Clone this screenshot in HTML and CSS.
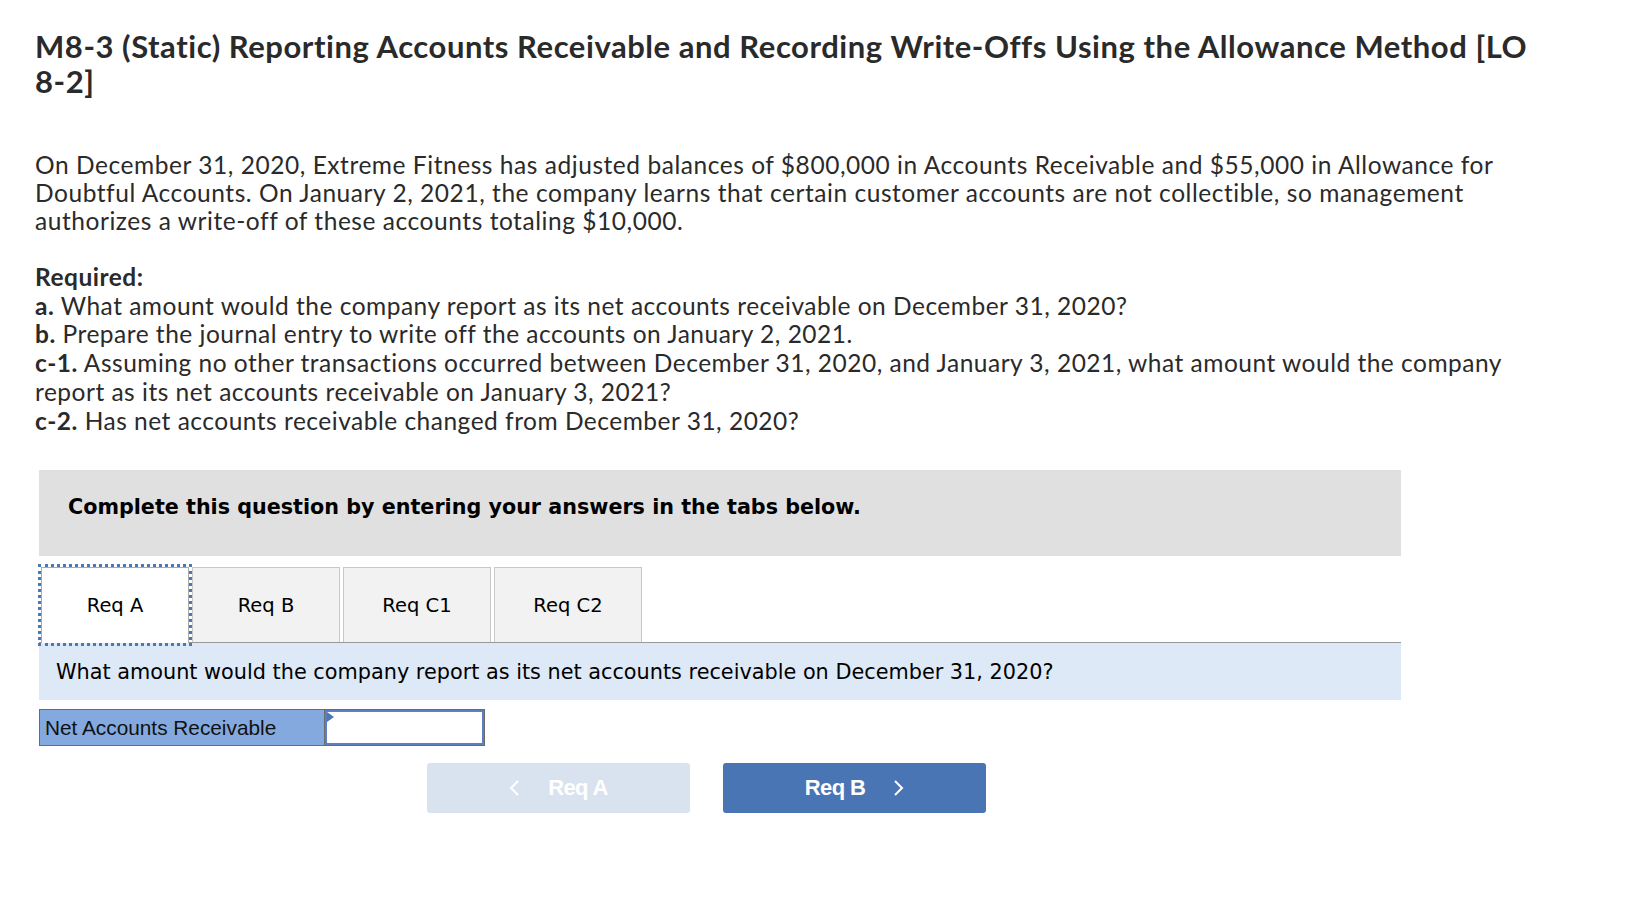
FILE: index.html
```html
<!DOCTYPE html>
<html>
<head>
<meta charset="utf-8">
<link rel="stylesheet" href="styles.css">
</head>
<body>
<div class="page">
  <h1 class="title">M8-3 (Static) Reporting Accounts Receivable and Recording Write-Offs Using the Allowance Method [LO <span class="nw">8-2]</span></h1>
  <p class="intro">On December 31, 2020, Extreme Fitness has adjusted balances of $800,000 in Accounts Receivable and $55,000 in Allowance for Doubtful Accounts. On January 2, 2021, the company learns that certain customer accounts are not collectible, so management authorizes a write-off of these accounts totaling $10,000.</p>
  <div class="required">
    <div class="req-head">Required:</div>
    <div><b>a.</b> What amount would the company report as its net accounts receivable on December 31, 2020?</div>
    <div><b>b.</b> Prepare the journal entry to write off the accounts on January 2, 2021.</div>
    <div><b>c-1.</b> Assuming no other transactions occurred between December 31, 2020, and January 3, 2021, what amount would the company report as its net accounts receivable on January 3, 2021?</div>
    <div><b>c-2.</b> Has net accounts receivable changed from December 31, 2020?</div>
  </div>

  <div class="panel">
    <div class="instructions">Complete this question by entering your answers in the tabs below.</div>
    <div class="tabs">
      <div class="tab active">Req A</div>
      <div class="tab">Req B</div>
      <div class="tab">Req C1</div>
      <div class="tab">Req C2</div>
    </div>
    <div class="question">What amount would the company report as its net accounts receivable on December 31, 2020?</div>
    <div class="answer-row">
      <div class="answer-label">Net Accounts Receivable</div>
      <div class="answer-input"><span class="flag"></span></div>
    </div>
    <div class="nav">
      <div class="btn btn-disabled">
        <svg class="chev" width="12" height="18" viewBox="0 0 12 18"><polyline points="9,2 2,9 9,16" fill="none" stroke="#fff" stroke-width="2"/></svg>
        <span>Req A</span>
      </div>
      <div class="btn btn-primary">
        <span>Req B</span>
        <svg class="chev" width="12" height="18" viewBox="0 0 12 18"><polyline points="3,2 10,9 3,16" fill="none" stroke="#fff" stroke-width="2"/></svg>
      </div>
    </div>
  </div>
</div>
</body>
</html>
```

FILE: styles.css
```css
* { box-sizing: border-box; }
html, body { margin: 0; padding: 0; background: #fff; }
body {
  font-family: "Lato", "Open Sans", sans-serif;
  color: #2a2a2a;
}
.page {
  padding: 29px 0 0 35px;
  width: 1545px;
}
.title {
  margin: 0;
  font-size: 31px;
  line-height: 35px;
  font-weight: 700;
  letter-spacing: 0.55px;
  color: #2a2a2a;
}
.nw { white-space: nowrap; }
.intro {
  margin: 52px 0 0 0;
  font-size: 24.5px;
  line-height: 28px;
  letter-spacing: 0.55px;
}
.required {
  margin-top: 28px;
  font-size: 24.5px;
  line-height: 28.7px;
  letter-spacing: 0.5px;
}
.req-head { font-weight: 700; }
.required b { font-weight: 700; }

.panel {
  margin-top: 35px;
  margin-left: 4px;
  width: 1362px;
  font-family: "DejaVu Sans", Verdana, sans-serif;
}
.instructions {
  height: 86px;
  background: #e0e0e0;
  padding: 25px 29px 0;
  font-size: 20.7px;
  font-weight: 700;
  line-height: 24px;
  color: #000;
}
.tabs {
  display: flex;
  gap: 3px;
  margin-top: 11px;
  padding-left: 2px;
  border-bottom: 1px solid #999;
  height: 76px;
  align-items: flex-end;
}
.tab {
  width: 148px;
  height: 75px;
  background: #f2f2f2;
  border: 1px solid #c8c8c8;
  border-bottom: none;
  display: flex;
  align-items: center;
  justify-content: center;
  font-size: 19.5px;
  color: #000;
}
.tab.active {
  background: #fff;
  border-color: #aaa;
  outline: 3px dotted #4a78b5;
  outline-offset: 0;
  height: 76px;
  margin-bottom: -1px;
}
.question {
  height: 57px;
  background: #dde9f7;
  padding: 0 17px;
  display: flex;
  align-items: center;
  font-size: 20.8px;
  color: #000;
}
.answer-row {
  margin-top: 9px;
  display: flex;
  width: 446px;
  height: 37px;
  border: 1px solid #6b6b6b;
  background: #6b6b6b;
  gap: 1px;
}
.answer-label {
  width: 284px;
  background: #84a9de;
  font-family: "Liberation Sans", Arial, sans-serif;
  font-size: 20.8px;
  color: #111;
  display: flex;
  align-items: center;
  padding-left: 5px;
}
.answer-input {
  flex: 1;
  background: #fff;
  border: 2px solid #5a80c2;
  position: relative;
}
.flag {
  position: absolute;
  left: 0;
  top: 0;
  width: 0;
  height: 0;
  border-top: 5px solid transparent;
  border-bottom: 5px solid transparent;
  border-left: 7px solid #4a78b5;
}
.nav {
  display: flex;
  gap: 33px;
  margin-top: 17px;
  margin-left: 388px;
}
.btn {
  width: 263px;
  height: 50px;
  border-radius: 3px;
  display: flex;
  align-items: center;
  justify-content: center;
  gap: 27px;
  font-family: "Liberation Sans", Arial, sans-serif;
  font-weight: 700;
  font-size: 22px;
  color: #fff;
  letter-spacing: -0.6px;
}
.btn-disabled { background: #d9e3ef; }
.btn-primary { background: #4a75b4; }
.chev { display: block; }
```
